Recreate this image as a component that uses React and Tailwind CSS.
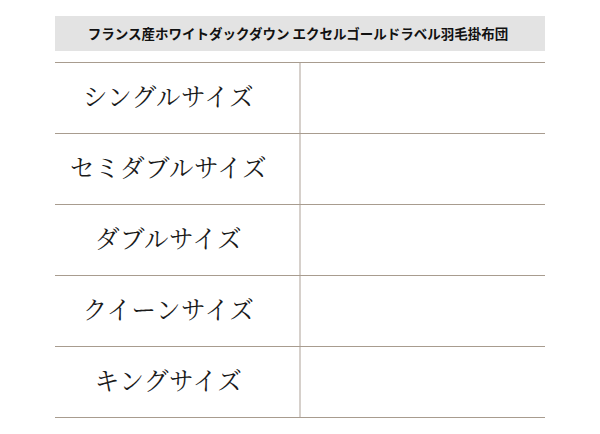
export default function App() {
  const sizes = ["シングルサイズ", "セミダブルサイズ", "ダブルサイズ", "クイーンサイズ", "キングサイズ"];
  return (
    <div className="w-[600px] h-[434px] bg-white pt-4">
      <div className="mx-[55px] w-[490px]">
        <div
          className="h-[35px] bg-[#e3e3e3] flex items-center justify-center text-[13.5px] font-bold text-[#111] pr-[4px]"
          style={{ fontFamily: '"Noto Sans CJK JP", sans-serif' }}
        >
          フランス産ホワイトダックダウン エクセルゴールドラベル羽毛掛布団
        </div>
        <div className="mt-[11px] border-t border-[#a89c8f]">
          {sizes.map((s, i) => (
            <div key={i} className="flex h-[71px] border-b border-[#a89c8f]">
              <div
                className="w-[244px] pr-[17px] pb-[3px] flex items-center justify-center text-[24.5px] text-[#1a1a1a] tracking-[0.5px]"
                style={{ fontFamily: '"Noto Serif CJK JP", "Noto Sans CJK JP", serif' }}
              >
                {s}
              </div>
              <div className="w-[2px] bg-[#d6d0cb]" />
              <div className="flex-1" />
            </div>
          ))}
        </div>
      </div>
    </div>
  );
}
